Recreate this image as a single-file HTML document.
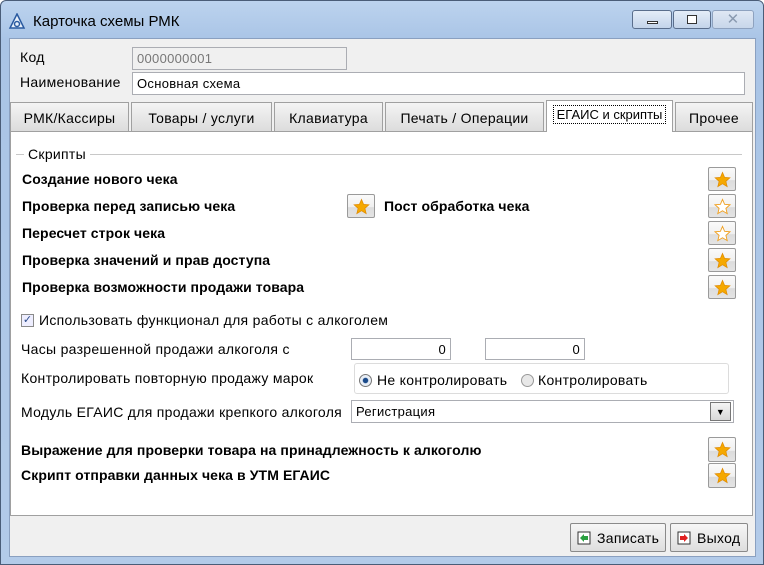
<!DOCTYPE html><html><head><meta charset="utf-8"><style>
*{box-sizing:border-box;margin:0;padding:0}
body{width:764px;height:565px;overflow:hidden;font-family:"Liberation Sans","DejaVu Sans",sans-serif;font-size:14px;letter-spacing:0.3px;color:#000;background:#fff;position:relative}
.a{position:absolute;white-space:nowrap}
.b{font-weight:bold;letter-spacing:0.1px}
.inp{position:absolute;background:#fff;border:1px solid #abadb3;height:22px;padding:3px 4px;font-size:13px;letter-spacing:0.3px}
.tab{position:absolute;top:102px;height:29px;border:1px solid #a0a0a0;border-bottom:none;background:linear-gradient(#f4f4f4,#dcdcdc);text-align:center;padding-top:7px;font-size:14px}
.sb{position:absolute;width:28px;height:24px;border:1px solid #9a9a9a;border-radius:2px;background:linear-gradient(#fafafa 0,#f0f0f0 55%,#dcdcdc 56%,#e4e4e4);}
.sb svg{position:absolute;left:5px;top:3px}
.btn{position:absolute;top:523px;height:29px;border:1px solid #8a8a8a;border-radius:2px;background:linear-gradient(#f6f6f6,#dedede);padding:6px 0 0 26px;font-size:14px}
</style></head><body>
<div class="a" style="left:0;top:0;width:764px;height:565px;background:linear-gradient(#bcd3ee,#a9c4e6 40px,#b3cbe9);border:1px solid #4a5d78;border-radius:6px 6px 0 0"></div>
<svg class="a" style="left:8px;top:13px" width="18" height="18" viewBox="0 0 18 18"><path d="M9 1 L16 15 L2 15 Z" fill="#e8f0fa" stroke="#2a5aa0" stroke-width="1.5"/><circle cx="9" cy="11" r="2.5" fill="none" stroke="#2a5aa0" stroke-width="1.5"/></svg>
<div class="a" style="left:33px;top:13px;font-size:15px;letter-spacing:0">Карточка схемы РМК</div>
<div class="a" style="left:632px;top:10px;width:40px;height:19px;border:1px solid #5a6e8c;border-radius:3px;background:linear-gradient(#e4edf8,#c3d4ea)"><div class="a" style="left:14px;top:10px;width:11px;height:3px;border:1px solid #333;background:#fff"></div></div>
<div class="a" style="left:673px;top:10px;width:38px;height:19px;border:1px solid #5a6e8c;border-radius:3px;background:linear-gradient(#e4edf8,#c3d4ea)"><div class="a" style="left:13px;top:4px;width:10px;height:9px;border:1px solid #333;background:#fff"></div></div>
<div class="a" style="left:712px;top:10px;width:42px;height:19px;border:1px solid #8ea2bf;border-radius:3px;background:linear-gradient(#dfe8f4,#c8d7ea);color:#8a9ab0;font-size:15px;text-align:center;line-height:17px">✕</div>
<div class="a" style="left:9px;top:38px;width:747px;height:519px;background:#f0f0f0;border:1px solid #8aa0c0"></div>
<div class="a" style="left:20px;top:49px">Код</div>
<div class="inp" style="left:132px;top:47px;width:215px;height:23px;background:#f0f0f0;color:#777">0000000001</div>
<div class="a" style="left:20px;top:74px">Наименование</div>
<div class="inp" style="left:132px;top:72px;width:613px;height:23px">Основная схема</div>
<div class="a" style="left:10px;top:131px;width:743px;height:385px;background:#fff;border:1px solid #a0a0a0"></div>
<div class="tab" style="left:10px;width:119px">РМК/Кассиры</div>
<div class="tab" style="left:131px;width:141px">Товары / услуги</div>
<div class="tab" style="left:274px;width:109px">Клавиатура</div>
<div class="tab" style="left:385px;width:159px">Печать / Операции</div>
<div class="tab" style="left:546px;top:100px;height:32px;width:127px;background:#fff;padding-top:6px;font-size:13px;letter-spacing:0"><span style="border:1px dotted #000;padding:1px 3px">ЕГАИС и скрипты</span></div>
<div class="tab" style="left:675px;width:78px">Прочее</div>
<div class="a" style="left:16px;top:154px;width:726px;border-top:1px solid #c8c8c8"></div>
<div class="a" style="left:24px;top:146px;background:#fff;padding:0 4px 0 4px">Скрипты</div>
<div class="a b" style="left:22px;top:171px">Создание нового чека</div>
<div class="a b" style="left:22px;top:198px">Проверка перед записью чека</div>
<div class="a b" style="left:384px;top:198px">Пост обработка чека</div>
<div class="a b" style="left:22px;top:225px">Пересчет строк чека</div>
<div class="a b" style="left:22px;top:252px">Проверка значений и прав доступа</div>
<div class="a b" style="left:22px;top:279px">Проверка возможности продажи товара</div>
<div class="a" style="left:21px;top:314px;width:13px;height:13px;border:1px solid #8a8a8a;background:#eef;color:#2a4a8a;font-size:11px;line-height:11px;text-align:center;letter-spacing:0">✓</div>
<div class="a" style="left:39px;top:312px">Использовать функционал для работы с алкоголем</div>
<div class="a" style="left:21px;top:341px">Часы разрешенной продажи алкоголя с</div>
<div class="inp" style="left:351px;top:338px;width:100px;text-align:right">0</div>
<div class="inp" style="left:485px;top:338px;width:100px;text-align:right">0</div>
<div class="a" style="left:21px;top:370px">Контролировать повторную продажу марок</div>
<div class="a" style="left:354px;top:363px;width:375px;height:31px;border:1px solid #dcdcdc;border-radius:3px"></div>
<div class="a" style="left:359px;top:374px;width:13px;height:13px;border-radius:50%;border:1px solid #777;background:radial-gradient(#1a4a8a 30%,#e8eef6 40%)"></div>
<div class="a" style="left:377px;top:372px">Не контролировать</div>
<div class="a" style="left:521px;top:374px;width:13px;height:13px;border-radius:50%;border:1px solid #999;background:#e8e8e8"></div>
<div class="a" style="left:538px;top:372px">Контролировать</div>
<div class="a" style="left:21px;top:404px">Модуль ЕГАИС для продажи крепкого алкоголя</div>
<div class="inp" style="left:351px;top:400px;width:383px;height:23px">Регистрация</div>
<div class="a" style="left:710px;top:402px;width:21px;height:19px;border:1px solid #777;background:linear-gradient(#f4f4f4,#d8d8d8);text-align:center;font-size:9px;line-height:18px">▼</div>
<div class="a b" style="left:21px;top:442px">Выражение для проверки товара на принадлежность к алкоголю</div>
<div class="a b" style="left:21px;top:467px">Скрипт отправки данных чека в УТМ ЕГАИС</div>
<div class="sb" style="left:708px;top:167px"><svg width="17" height="17" viewBox="0 0 24 24"><path d="M12 2l3 7 7.5.6-5.7 5 1.8 7.4L12 18l-6.6 4 1.8-7.4-5.7-5L9 9z" fill="#f5a800" stroke="#e08a00"/></svg></div>
<div class="sb" style="left:708px;top:194px"><svg width="17" height="17" viewBox="0 0 24 24"><path d="M12 2l3 7 7.5.6-5.7 5 1.8 7.4L12 18l-6.6 4 1.8-7.4-5.7-5L9 9z" fill="#fff" stroke="#f0a020" stroke-width="1.3"/></svg></div>
<div class="sb" style="left:708px;top:221px"><svg width="17" height="17" viewBox="0 0 24 24"><path d="M12 2l3 7 7.5.6-5.7 5 1.8 7.4L12 18l-6.6 4 1.8-7.4-5.7-5L9 9z" fill="#fff" stroke="#f0a020" stroke-width="1.3"/></svg></div>
<div class="sb" style="left:708px;top:248px"><svg width="17" height="17" viewBox="0 0 24 24"><path d="M12 2l3 7 7.5.6-5.7 5 1.8 7.4L12 18l-6.6 4 1.8-7.4-5.7-5L9 9z" fill="#f5a800" stroke="#e08a00"/></svg></div>
<div class="sb" style="left:708px;top:275px"><svg width="17" height="17" viewBox="0 0 24 24"><path d="M12 2l3 7 7.5.6-5.7 5 1.8 7.4L12 18l-6.6 4 1.8-7.4-5.7-5L9 9z" fill="#f5a800" stroke="#e08a00"/></svg></div>
<div class="sb" style="left:347px;top:194px"><svg width="17" height="17" viewBox="0 0 24 24"><path d="M12 2l3 7 7.5.6-5.7 5 1.8 7.4L12 18l-6.6 4 1.8-7.4-5.7-5L9 9z" fill="#f5a800" stroke="#e08a00"/></svg></div>
<div class="sb" style="left:708px;top:437px;height:25px"><svg width="17" height="17" viewBox="0 0 24 24"><path d="M12 2l3 7 7.5.6-5.7 5 1.8 7.4L12 18l-6.6 4 1.8-7.4-5.7-5L9 9z" fill="#f5a800" stroke="#e08a00"/></svg></div>
<div class="sb" style="left:708px;top:463px;height:25px"><svg width="17" height="17" viewBox="0 0 24 24"><path d="M12 2l3 7 7.5.6-5.7 5 1.8 7.4L12 18l-6.6 4 1.8-7.4-5.7-5L9 9z" fill="#f5a800" stroke="#e08a00"/></svg></div>
<div class="btn" style="left:570px;width:96px"><svg class="a" style="left:6px;top:7px" width="14" height="14" viewBox="0 0 14 14"><rect x="1" y="1" width="12" height="12" fill="#fff" stroke="#333"/><path d="M3 7l4-4v2h4v4H7v2z" fill="#2aa040"/></svg>Записать</div>
<div class="btn" style="left:670px;width:78px"><svg class="a" style="left:6px;top:7px" width="14" height="14" viewBox="0 0 14 14"><rect x="1" y="1" width="12" height="12" fill="#fff" stroke="#333"/><path d="M11 7L7 3v2H3v4h4v2z" fill="#e02020"/></svg>Выход</div>
</body></html>
